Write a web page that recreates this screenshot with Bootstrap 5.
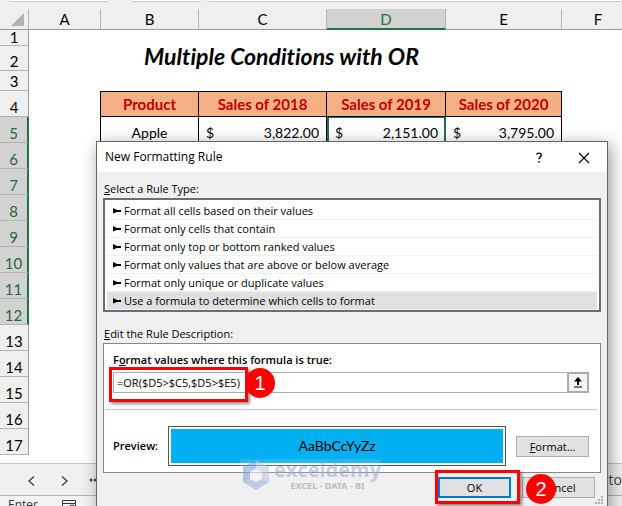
<!DOCTYPE html>
<html lang="en">
<head>
<meta charset="utf-8">
<meta name="viewport" content="width=device-width, initial-scale=1">
<title>Multiple Conditions with OR</title>
<link href="https://cdn.jsdelivr.net/npm/bootstrap@5.3.0/dist/css/bootstrap.min.css" rel="stylesheet">
<style>
  body { font-family: "Open Sans", "Noto Sans", sans-serif; color: #000; background: #fff; font-size: 11px; line-height: 16px; }
  .workbook { height: 100vh; }
  /* ribbon remainder */
  .ribbon { height: 9px; background: #efefef; }
  .ribbon-box { height: 2px; background: #fff; border-bottom: 1px solid #c8c8c8; border-radius: 0 0 4px 4px; }
  .ribbon-name { width: 100px; margin-left: 9px; }
  .ribbon-fx { width: 71px; margin-left: 22px; }
  .ribbon-bar { margin-left: 6px; }
  /* grid */
  .sheet { table-layout: fixed; width: 100%; border-collapse: separate; border-spacing: 0; font: 15px/18px Lato, sans-serif; margin-bottom: 8px; }
  .sheet th, .sheet td { padding: 0; white-space: nowrap; font-weight: 400; text-align: center; }
  .sheet thead th { height: 21px; background: #efefef; border-right: 1px solid #b4b4b4; border-bottom: 1px solid #999; }
  .sheet thead th.picked { background: #d2d2d2; color: #217346; border-bottom: 2px solid #217346; }
  .sheet thead th:last-child { padding-left: 12px; border-right: 0; }
  .sheet tbody th { background: #efefef; border-right: 1px solid #999; border-bottom: 1px solid #b4b4b4; vertical-align: bottom; line-height: 15px; }
  .sheet tbody tr:not(.row-s) th { padding-bottom: 1px; }
  .sheet tbody th.picked { background: #d2d2d2; color: #1c6a41; border-right: 2px solid #217346; }
  .sheet tr { height: 26px; }
  .sheet .row-s { height: 16px; } .sheet .row-m { height: 25px; } .sheet .row-n { height: 20px; }
  .sheet thead tr { height: 21px; }
  .c-num { width: 29px; } .c-a { width: 72px; } .c-b { width: 98px; } .c-c { width: 128px; } .c-d { width: 119px; } .c-e { width: 116px; }
  .sheet .banner { font-size: 23px; line-height: 20px; font-weight: 700; font-style: italic; font-variant-ligatures: none; vertical-align: top; padding-right: 100px; }
  .sheet .headcell { background: #f4b084; color: #c00000; font-weight: 700; border-right: 1px solid #000; border-top: 1px solid #000; border-bottom: 1px solid #000; }
  .sheet .bodycell { border-right: 1px solid #000; line-height: 18px; vertical-align: bottom; font-size: 14px; padding-bottom: 1px; }
  .sheet .edge { border-right: 1px solid #000; }
  .sheet .active-cell { border-right: 2px solid #217346; border-left: 2px solid #217346; border-top: 1px solid #217346; }
  .money { padding: 0 7px; }
  .active-cell .money { padding: 0 6px; }
  /* tab strip and status */
  .tabstrip { height: 33px; background: #f0f0f0; border-top: 1px solid #c6c6c6; border-bottom: 1px solid #b4b4b4; padding-left: 15px; font-size: 14px; color: #444; }
  .tabstrip button { width: 33px; line-height: 16px; }
  .tabstrip .dots { width: 14px; margin-left: 8px; }
  .status { height: 24px; background: #f3f3f3; color: #333; font-size: 12px; line-height: 18px; }
  .plain { border: 0; background: none; padding: 0; color: inherit; }
  /* dialog window */
  .dlg { position: absolute; top: 141px; left: 96px; right: 14px; height: 400px; background: #f0f0f0; border: 1px solid #666; box-shadow: 3px 4px 16px rgba(0,0,0,.4); }
  .dlg-title { height: 30px; background: #fff; padding: 0 17px 0 8px; font-size: 12px; }
  .help { margin-right: 35px; }
  .dlg-body { padding: 9px 6px 0 6px; }
  .cap { padding-left: 1px; }
  .rules { border: 2px solid #6c6c74; background: #fff; height: 114px; margin-top: 1px; padding: 2px; }
  .rules button { display: flex; align-items: center; width: 100%; height: 18px; padding: 0 0 0 6px; border: 0; border-bottom: 1px solid #efefef; background: #fff; color: #000; text-align: left; line-height: 17px; white-space: nowrap; }
  .rules button.chosen { background: #e0e0e2; }
  .rules svg { margin-right: 3px; }
  .edit-cap { margin-top: 14px; }
  .desc { border: 1px solid #828790; background: #fff; margin-top: 1px; padding: 8px 11px 6px 9px; }
  .heavy { font-weight: 600; }
  .formula { border: 1px solid #ababab; height: 21px; }
  .formula input { border: 0; padding: 0 0 0 3px; min-width: 0; outline: 0; }
  .pick { width: 22px; border: 2px solid #ababab; background: #f4f4f4; margin: -1px; }
  .sep { height: 1px; background: #c8c8c8; margin: 16px -8px; }
  .sample { border: 1px solid #555; padding: 2px; height: 40px; margin: 0 10px; }
  .sample div { background: #00b0f0; font: 14px/34px Lato, sans-serif; text-align: center; }
  .push { background: #e1e1e1; border: 1px solid #adadad; height: 21px; width: 73px; padding: 0; color: #000; line-height: 17px; }
  .push.main { border: 2px solid #0078d7; }
  .actions { gap: 11px; padding: 4px 6px 0 0; }
  /* callouts */
  .frame { position: absolute; border: 3px solid #f00; box-shadow: 2px 2px 3px rgba(0,0,0,.45); pointer-events: none; }
  .frame-formula { left: 12px; top: 225px; width: 139px; height: 35px; }
  .frame-ok { right: 87px; top: 328px; width: 85px; height: 34px; }
  .dot { position: absolute; width: 30px; height: 30px; border-radius: 50%; background: #f00; color: #fff; font: 20px/30px "Liberation Sans", sans-serif; text-align: center; }
  .dot-1 { left: 148px; top: 226px; }
  .dot-2 { right: 51px; top: 332px; }
  .grip { position: absolute; right: 3px; top: 354px; }
  /* watermark */
  .wmark { position: absolute; left: 143px; top: 317px; opacity: .6; color: #a5afd0; background: rgba(240,240,240,.25); gap: 4px; padding-left: 2px; }
  .wmark-name { font: 700 20px/22px "Open Sans", sans-serif; }
  .wmark-sub { font: 700 9px/10px "Noto Sans", sans-serif; color: #9a9aa5; }
</style>
<script src="https://cdn.jsdelivr.net/npm/bootstrap@5.3.0/dist/js/bootstrap.bundle.min.js"></script>
</head>
<body>
<main class="workbook position-relative overflow-hidden d-flex flex-column">
  <div class="ribbon d-flex flex-shrink-0">
    <div class="ribbon-box ribbon-name"></div><div class="ribbon-box ribbon-fx"></div><div class="ribbon-box ribbon-bar flex-grow-1"></div>
  </div>
  <table class="sheet flex-shrink-0">
    <colgroup><col class="c-num"><col class="c-a"><col class="c-b"><col class="c-c"><col class="c-d"><col class="c-e"><col></colgroup>
    <thead><tr>
      <th><svg class="d-block ms-auto me-1" width="13" height="13" viewBox="0 0 13 13"><path d="M13 0V13H0Z" fill="#b2b2b2"/></svg></th>
      <th>A</th><th>B</th><th>C</th><th class="picked">D</th><th>E</th><th>F</th></tr></thead>
    <tbody>
      <tr class="row-s"><th>1</th><td colspan="6"></td></tr>
      <tr class="row-m"><th>2</th><td></td><td colspan="4" class="banner">Multiple Conditions with OR</td><td></td></tr>
      <tr class="row-n"><th>3</th><td colspan="6"></td></tr>
      <tr><th>4</th><td class="edge"></td><td class="headcell">Product</td><td class="headcell">Sales of 2018</td><td class="headcell">Sales of 2019</td><td class="headcell">Sales of 2020</td><td></td></tr>
      <tr><th class="picked">5</th><td class="edge"></td><td class="bodycell">Apple</td>
        <td class="bodycell"><div class="money d-flex justify-content-between"><span>$</span><span>3,822.00</span></div></td>
        <td class="bodycell active-cell"><div class="money d-flex justify-content-between"><span>$</span><span>2,151.00</span></div></td>
        <td class="bodycell"><div class="money d-flex justify-content-between"><span>$</span><span>3,795.00</span></div></td><td></td></tr>
      <tr><th class="picked">6</th><td colspan="6"></td></tr>
      <tr><th class="picked">7</th><td colspan="6"></td></tr>
      <tr><th class="picked">8</th><td colspan="6"></td></tr>
      <tr><th class="picked">9</th><td colspan="6"></td></tr>
      <tr><th class="picked">10</th><td colspan="6"></td></tr>
      <tr><th class="picked">11</th><td colspan="6"></td></tr>
      <tr><th class="picked">12</th><td colspan="6"></td></tr>
      <tr><th>13</th><td colspan="6"></td></tr>
      <tr><th>14</th><td colspan="6"></td></tr>
      <tr><th>15</th><td colspan="6"></td></tr>
      <tr><th>16</th><td colspan="6"></td></tr>
      <tr><th>17</th><td colspan="6"></td></tr>
    </tbody>
  </table>
  <div class="tabstrip d-flex align-items-center flex-shrink-0">
    <button class="plain" type="button" aria-label="Previous sheet"><svg width="7" height="10" viewBox="0 0 7 10" fill="none" stroke="#444" stroke-width="1.4"><path d="M6 .5 1 5 6 9.500"/></svg></button>
    <button class="plain" type="button" aria-label="Next sheet"><svg width="7" height="10" viewBox="0 0 7 10" fill="none" stroke="#444" stroke-width="1.4"><path d="M1 .5 6 5 1 9.500"/></svg></button>
    <button class="plain dots" type="button" aria-label="More sheets"><svg class="d-block" width="14" height="4" viewBox="0 0 14 4" fill="#444"><circle cx="2" cy="2" r="1.500"/><circle cx="6" cy="2" r="1.500"/><circle cx="10" cy="2" r="1.500"/></svg></button>
    <span class="ms-auto">to</span>
  </div>
  <div class="status d-flex flex-shrink-0 ps-2">
    <span>Enter</span>
    <svg class="ms-4 mt-1" width="15" height="14" viewBox="0 0 15 14" fill="none" stroke="#333"><path d="M.5 13V.5H13.500V13M.5 3.500H13.500"/><circle cx="10" cy="8" r="3"/></svg>
  </div>

  <section class="dlg" role="dialog" aria-labelledby="dlg-name">
    <div class="dlg-title d-flex align-items-center">
      <span id="dlg-name">New Formatting Rule</span>
      <button class="plain ms-auto help" type="button" aria-label="Help"><svg width="8" height="11" viewBox="0 0 8 11" fill="none" stroke="#000" stroke-width="1.4"><path d="M1.500 2.500C1.800.8 6.200.3 6.200 3 6.200 5 4 5 4 7.300M4 9v1.500"/></svg></button>
      <button class="plain" type="button" aria-label="Close"><svg width="12" height="12" viewBox="0 0 12 12" fill="none" stroke="#000" stroke-width="1.1"><path d="M1 1 11 11M11 1 1 11"/></svg></button>
    </div>
    <div class="dlg-body">
      <div class="cap"><u>S</u>elect a Rule Type:</div>
      <div class="rules">
        <button type="button"><svg width="8" height="6" viewBox="0 0 8 6"><path d="M0 0 4 2H8V4H4L0 5.500Z"/></svg>Format all cells based on their values</button>
        <button type="button"><svg width="8" height="6" viewBox="0 0 8 6"><path d="M0 0 4 2H8V4H4L0 5.500Z"/></svg>Format only cells that contain</button>
        <button type="button"><svg width="8" height="6" viewBox="0 0 8 6"><path d="M0 0 4 2H8V4H4L0 5.500Z"/></svg>Format only top or bottom ranked values</button>
        <button type="button"><svg width="8" height="6" viewBox="0 0 8 6"><path d="M0 0 4 2H8V4H4L0 5.500Z"/></svg>Format only values that are above or below average</button>
        <button type="button"><svg width="8" height="6" viewBox="0 0 8 6"><path d="M0 0 4 2H8V4H4L0 5.500Z"/></svg>Format only unique or duplicate values</button>
        <button type="button" class="chosen"><svg width="8" height="6" viewBox="0 0 8 6"><path d="M0 0 4 2H8V4H4L0 5.500Z"/></svg>Use a formula to determine which cells to format</button>
      </div>
      <div class="cap edit-cap"><u>E</u>dit the Rule Description:</div>
      <div class="desc">
        <label class="heavy d-block mb-1" for="formula">F<u>o</u>rmat values where this formula is true:</label>
        <div class="formula d-flex">
          <input id="formula" class="flex-grow-1" type="text" value="=OR($D5&gt;$C5,$D5&gt;$E5)">
          <button class="pick p-0 d-flex align-items-center justify-content-center" type="button" aria-label="Collapse dialog"><svg width="10" height="11" viewBox="0 0 10 11"><path d="M5 0 9 4.500H6V8H4V4.500H1ZM1 9.500H9V10.500H1Z"/></svg></button>
        </div>
        <div class="sep"></div>
        <div class="d-flex align-items-center">
          <span class="heavy">Preview:</span>
          <div class="sample flex-grow-1"><div>AaBbCcYyZz</div></div>
          <button class="push" type="button"><u>F</u>ormat...</button>
        </div>
      </div>
      <div class="actions d-flex justify-content-end">
        <button class="push main" type="button">OK</button>
        <button class="push" type="button">Cancel</button>
      </div>
    </div>
    <div class="wmark d-flex align-items-center">
      <svg width="28" height="32" viewBox="0 0 28 32"><path d="M14 1 27 8V23L14 31 1 23V8Z" fill="#c2c9dc"/><path d="M14 1V10L8 13V20L1 23V8Z" fill="#8aa2dc"/><path d="M1 23 8 20 14 23 20 20 27 23 14 31Z" fill="#9db0e0"/><path d="M14 10 20 13V20L14 23 8 20V13Z" fill="#f5f5f5"/></svg>
      <div class="text-center"><div class="wmark-name">exceldemy</div><div class="wmark-sub">EXCEL - DATA - BI</div></div>
    </div>
    <div class="frame frame-formula"></div><div class="dot dot-1">1</div>
    <div class="frame frame-ok"></div><div class="dot dot-2">2</div>
    <svg class="grip" width="9" height="9" viewBox="0 0 9 9" fill="#b0b0b0"><path d="M6 0h2v2H6zM3 3h2v2H3zM6 3h2v2H6zM0 6h2v2H0zM3 6h2v2H3zM6 6h2v2H6z"/></svg>
  </section>
</main>
</body>
</html>
